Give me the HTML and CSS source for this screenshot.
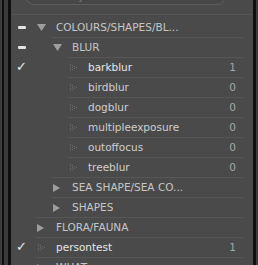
FILE: index.html
```html
<!DOCTYPE html>
<html>
<head>
<meta charset="utf-8">
<link rel="stylesheet" href="styles.css">
</head>
<body>
<div class="frame">
  <div class="edge-left"></div>
  <div class="panel">
    <div class="header">
      <div class="search"><span class="placeholder">Filter Keywords</span></div>
    </div>
    <div class="list">
      <div class="row first">
        <div class="mark"><span class="minus"></span></div>
        <div class="item d0">
          <span class="tw"><svg width="9" height="7" viewBox="0 0 9 7"><polygon points="0,0 9,0 4.5,7" class="tri"/></svg></span>
          <span class="name caps">COLOURS/SHAPES/BL...</span>
        </div>
      </div>
      <div class="row">
        <div class="mark"><span class="minus"></span></div>
        <div class="item d1">
          <span class="tw"><svg width="9" height="7" viewBox="0 0 9 7"><polygon points="0,0 9,0 4.5,7" class="tri"/></svg></span>
          <span class="name caps">BLUR</span>
        </div>
      </div>
      <div class="row">
        <div class="mark"><span class="check">✓</span></div>
        <div class="item d2">
          <span class="tw leaf"><svg width="7" height="7" viewBox="0 0 7 7"><g class="dots"><rect x="0" y="0" width="1" height="1"/><rect x="0" y="2" width="1" height="1"/><rect x="0" y="4" width="1" height="1"/><rect x="0" y="6" width="1" height="1"/><rect x="2" y="1" width="1" height="1"/><rect x="2" y="3" width="1" height="1"/><rect x="2" y="5" width="1" height="1"/><rect x="4" y="2" width="1" height="1"/><rect x="4" y="4" width="1" height="1"/><rect x="6" y="3" width="1" height="1"/></g></svg></span>
          <span class="name on">barkblur</span>
          <span class="count">1</span>
        </div>
      </div>
      <div class="row">
        <div class="mark"></div>
        <div class="item d2">
          <span class="tw leaf"><svg width="7" height="7" viewBox="0 0 7 7"><g class="dots"><rect x="0" y="0" width="1" height="1"/><rect x="0" y="2" width="1" height="1"/><rect x="0" y="4" width="1" height="1"/><rect x="0" y="6" width="1" height="1"/><rect x="2" y="1" width="1" height="1"/><rect x="2" y="3" width="1" height="1"/><rect x="2" y="5" width="1" height="1"/><rect x="4" y="2" width="1" height="1"/><rect x="4" y="4" width="1" height="1"/><rect x="6" y="3" width="1" height="1"/></g></svg></span>
          <span class="name">birdblur</span>
          <span class="count">0</span>
        </div>
      </div>
      <div class="row">
        <div class="mark"></div>
        <div class="item d2">
          <span class="tw leaf"><svg width="7" height="7" viewBox="0 0 7 7"><g class="dots"><rect x="0" y="0" width="1" height="1"/><rect x="0" y="2" width="1" height="1"/><rect x="0" y="4" width="1" height="1"/><rect x="0" y="6" width="1" height="1"/><rect x="2" y="1" width="1" height="1"/><rect x="2" y="3" width="1" height="1"/><rect x="2" y="5" width="1" height="1"/><rect x="4" y="2" width="1" height="1"/><rect x="4" y="4" width="1" height="1"/><rect x="6" y="3" width="1" height="1"/></g></svg></span>
          <span class="name">dogblur</span>
          <span class="count">0</span>
        </div>
      </div>
      <div class="row">
        <div class="mark"></div>
        <div class="item d2">
          <span class="tw leaf"><svg width="7" height="7" viewBox="0 0 7 7"><g class="dots"><rect x="0" y="0" width="1" height="1"/><rect x="0" y="2" width="1" height="1"/><rect x="0" y="4" width="1" height="1"/><rect x="0" y="6" width="1" height="1"/><rect x="2" y="1" width="1" height="1"/><rect x="2" y="3" width="1" height="1"/><rect x="2" y="5" width="1" height="1"/><rect x="4" y="2" width="1" height="1"/><rect x="4" y="4" width="1" height="1"/><rect x="6" y="3" width="1" height="1"/></g></svg></span>
          <span class="name">multipleexposure</span>
          <span class="count">0</span>
        </div>
      </div>
      <div class="row">
        <div class="mark"></div>
        <div class="item d2">
          <span class="tw leaf"><svg width="7" height="7" viewBox="0 0 7 7"><g class="dots"><rect x="0" y="0" width="1" height="1"/><rect x="0" y="2" width="1" height="1"/><rect x="0" y="4" width="1" height="1"/><rect x="0" y="6" width="1" height="1"/><rect x="2" y="1" width="1" height="1"/><rect x="2" y="3" width="1" height="1"/><rect x="2" y="5" width="1" height="1"/><rect x="4" y="2" width="1" height="1"/><rect x="4" y="4" width="1" height="1"/><rect x="6" y="3" width="1" height="1"/></g></svg></span>
          <span class="name">outoffocus</span>
          <span class="count">0</span>
        </div>
      </div>
      <div class="row">
        <div class="mark"></div>
        <div class="item d2">
          <span class="tw leaf"><svg width="7" height="7" viewBox="0 0 7 7"><g class="dots"><rect x="0" y="0" width="1" height="1"/><rect x="0" y="2" width="1" height="1"/><rect x="0" y="4" width="1" height="1"/><rect x="0" y="6" width="1" height="1"/><rect x="2" y="1" width="1" height="1"/><rect x="2" y="3" width="1" height="1"/><rect x="2" y="5" width="1" height="1"/><rect x="4" y="2" width="1" height="1"/><rect x="4" y="4" width="1" height="1"/><rect x="6" y="3" width="1" height="1"/></g></svg></span>
          <span class="name">treeblur</span>
          <span class="count">0</span>
        </div>
      </div>
      <div class="row">
        <div class="mark"></div>
        <div class="item d1">
          <span class="tw"><svg width="7" height="8" viewBox="0 0 7 8"><polygon points="0,0 7,4 0,8" class="tri"/></svg></span>
          <span class="name caps">SEA SHAPE/SEA CO...</span>
        </div>
      </div>
      <div class="row">
        <div class="mark"></div>
        <div class="item d1">
          <span class="tw"><svg width="7" height="8" viewBox="0 0 7 8"><polygon points="0,0 7,4 0,8" class="tri"/></svg></span>
          <span class="name caps">SHAPES</span>
        </div>
      </div>
      <div class="row">
        <div class="mark"></div>
        <div class="item d0">
          <span class="tw"><svg width="7" height="8" viewBox="0 0 7 8"><polygon points="0,0 7,4 0,8" class="tri"/></svg></span>
          <span class="name caps">FLORA/FAUNA</span>
        </div>
      </div>
      <div class="row">
        <div class="mark"><span class="check">✓</span></div>
        <div class="item d0">
          <span class="tw leaf"><svg width="7" height="7" viewBox="0 0 7 7"><g class="dots"><rect x="0" y="0" width="1" height="1"/><rect x="0" y="2" width="1" height="1"/><rect x="0" y="4" width="1" height="1"/><rect x="0" y="6" width="1" height="1"/><rect x="2" y="1" width="1" height="1"/><rect x="2" y="3" width="1" height="1"/><rect x="2" y="5" width="1" height="1"/><rect x="4" y="2" width="1" height="1"/><rect x="4" y="4" width="1" height="1"/><rect x="6" y="3" width="1" height="1"/></g></svg></span>
          <span class="name on">persontest</span>
          <span class="count">1</span>
        </div>
      </div>
      <div class="row">
        <div class="mark"></div>
        <div class="item d0">
          <span class="tw"><svg width="7" height="8" viewBox="0 0 7 8"><polygon points="0,0 7,4 0,8" class="tri"/></svg></span>
          <span class="name caps">WHAT</span>
        </div>
      </div>
    </div>
  </div>
  <div class="edge-right"></div>
</div>
</body>
</html>
```
FILE: styles.css
```css
html, body {
  margin: 0;
  padding: 0;
  background: #3c3c3c;
  overflow: hidden;
}
body {
  width: 258px;
  height: 265px;
  font-family: "DejaVu Sans", sans-serif;
  font-size: 10.5px;
}
.frame {
  display: flex;
  height: 265px;
}
.edge-left {
  width: 11px;
  flex: none;
  background: linear-gradient(to right, #3d3d3d 0 2px, #0f0f0f 2px 4px, #3a3a3a 4px 8px, #0f0f0f 8px 11px);
}
.edge-right {
  width: 5px;
  flex: none;
  background: linear-gradient(to right, #0f0f0f 0 3px, #3b3b3b 3px 5px);
}
.panel {
  flex: 1;
  background: #4a4a4a;
  overflow: hidden;
}
.header {
  height: 14px;
  border-bottom: 1px solid #565656;
  padding-left: 14px;
  margin-bottom: 2px;
  overflow: hidden;
}
.search {
  width: 201px;
  height: 20px;
  margin-top: -15px;
  border: 1px solid #5d5d5d;
  border-radius: 9px;
  background: #474747;
  box-sizing: border-box;
  padding-left: 10px;
  line-height: 21px;
}
.placeholder {
  color: #7a7a7a;
  font-size: 10.5px;
}
.list {
  display: flex;
  flex-direction: column;
}
.row {
  display: flex;
  height: 20px;
}
.mark {
  width: 20px;
  flex: none;
  display: flex;
  align-items: center;
  justify-content: center;
}
.minus {
  width: 8px;
  height: 3px;
  border-radius: 1px;
  background: #e2e2e2;
  margin-left: 1px;
}
.check {
  color: #ececec;
  font-size: 13px;
  line-height: 20px;
  margin-left: 1px;
}
.item {
  flex: 1;
  display: flex;
  align-items: center;
  border-top: 1px solid #565656;
  margin-right: 10px;
  box-sizing: border-box;
  padding-right: 7px;
}
.row.first .item {
  border-top-color: transparent;
}
.d0 { margin-left: 4px; }
.d1 { margin-left: 20px; }
.d2 { margin-left: 36px; }
.tw {
  width: 21px;
  flex: none;
  display: flex;
  align-items: center;
  padding-left: 2px;
  box-sizing: border-box;
}
.tw.leaf {
  padding-left: 3px;
}
.tri {
  fill: #9e9e9e;
}
.dots {
  fill: #6c6c6c;
}
.name {
  flex: 1;
  color: #cfcfcf;
  white-space: nowrap;
  line-height: 19px;
}
.name.caps {
  color: #c6c6c6;
}
.name.on {
  color: #e6e6e6;
}
.count {
  color: #a6a6a6;
  line-height: 19px;
}
```
